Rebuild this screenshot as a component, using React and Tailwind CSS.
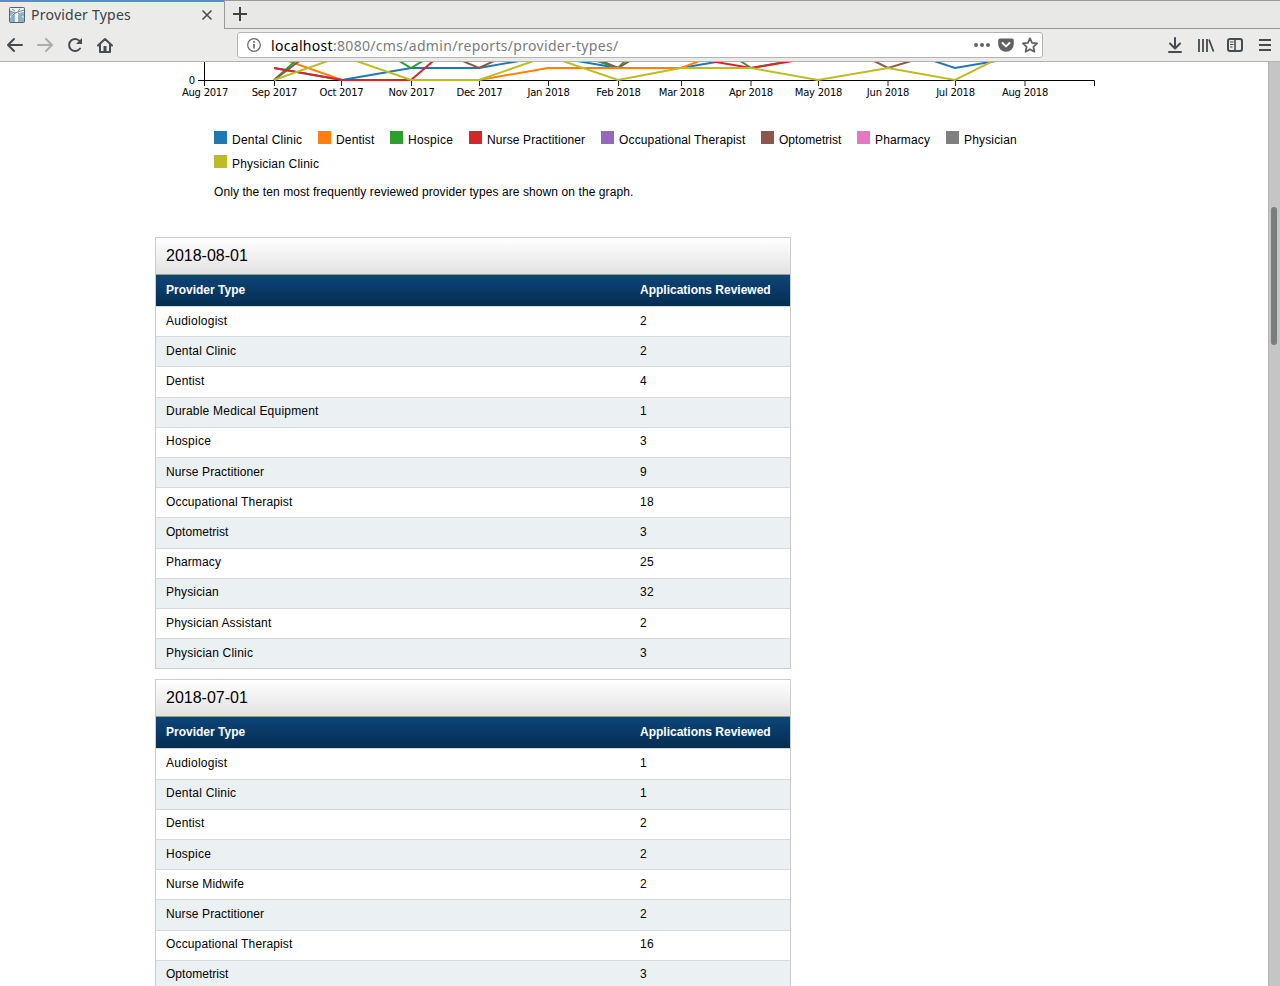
const AUGUST = [
  ['Audiologist', 2], ['Dental Clinic', 2], ['Dentist', 4], ['Durable Medical Equipment', 1],
  ['Hospice', 3], ['Nurse Practitioner', 9], ['Occupational Therapist', 18], ['Optometrist', 3],
  ['Pharmacy', 25], ['Physician', 32], ['Physician Assistant', 2], ['Physician Clinic', 3],
];
const JULY = [
  ['Audiologist', 1], ['Dental Clinic', 1], ['Dentist', 2], ['Hospice', 2], ['Nurse Midwife', 2],
  ['Nurse Practitioner', 2], ['Occupational Therapist', 16], ['Optometrist', 3],
];
const TRACKING = {
  Audiologist: 'tracking-[0.25px]',
  'Dental Clinic': 'tracking-[0.23px]',
  Dentist: 'tracking-[0.17px]',
  'Durable Medical Equipment': 'tracking-[0.21px]',
  Hospice: 'tracking-[0.25px]',
  'Nurse Midwife': 'tracking-[0.15px]',
  'Nurse Practitioner': 'tracking-[0.12px]',
  'Occupational Therapist': 'tracking-[0.15px]',
  Optometrist: 'tracking-[0.04px]',
  Pharmacy: 'tracking-[0.13px]',
  Physician: 'tracking-[0.16px]',
  'Physician Assistant': 'tracking-[0.14px]',
  'Physician Clinic': 'tracking-[0.19px]',
};
const LEGEND = [
  ['Dental Clinic', 'bg-[#1f77b4]', 'w-[104px]'], ['Dentist', 'bg-[#ff7f0e]', 'w-[72px]'],
  ['Hospice', 'bg-[#2ca02c]', 'w-[79px]'], ['Nurse Practitioner', 'bg-[#d62728]', 'w-[132px]'],
  ['Occupational Therapist', 'bg-[#9467bd]', 'w-[160px]'], ['Optometrist', 'bg-[#8c564b]', 'w-[96px]'],
  ['Pharmacy', 'bg-[#e377c2]', 'w-[89px]'], ['Physician', 'bg-[#7f7f7f]', 'w-[87px]'],
  ['Physician Clinic', 'bg-[#bcbd22]', 'w-[122px]'],
];
const TICKS = [
  [205, 'Aug 2017'], [274.5, 'Sep 2017'], [341.5, 'Oct 2017'], [411.5, 'Nov 2017'], [479.5, 'Dec 2017'],
  [548.5, 'Jan 2018'], [618.5, 'Feb 2018'], [681.5, 'Mar 2018'], [751, 'Apr 2018'], [818.5, 'May 2018'],
  [888, 'Jun 2018'], [955.5, 'Jul 2018'], [1025, 'Aug 2018'],
];
const LINES = [
  ['#1f77b4', '274,6 342,18 411,6 479,6 548,-6 618,6 681,6 751,-6'],
  ['#1f77b4', '919,-6 955,6 1025,-6'],
  ['#ff7f0e', '274,-6 342,18 411,18 479,18 548,6 618,6 681,6 713,-6'],
  ['#2ca02c', '274,18 301,-6'],
  ['#2ca02c', '391,-6 411,6 431,-6'],
  ['#2ca02c', '582,-6 618,6 630,-6'],
  ['#2ca02c', '733,-6 751,6'],
  ['#8c564b', '274,18 306,-6'],
  ['#8c564b', '451,-6 479,6 505,-6'],
  ['#8c564b', '590,-6 618,6 638,-6'],
  ['#8c564b', '751,6 820,-6'],
  ['#8c564b', '864,-6 888,6 928,-6'],
  ['#d62728', '274,6 342,18 411,18 439,-6'],
  ['#d62728', '681,-6 751,6 822,-6'],
  ['#ff7f0e', '548,6 681,6'],
  ['#bcbd22', '274,18 342,-6 411,18 479,18 548,-6 618,18 681,6 751,6 818,18 888,6 955,18 1003,-6'],
];

function Toolbar() {
  return (
    <header className="h-[62px] shrink-0 bg-[#ebebe9] font-['Noto_Sans',sans-serif] text-[#3b4144]">
      <div className="flex h-[29px]">
        <div className="flex w-[224px] items-center border-t-2 border-[#4a90d9] pb-[2px] pl-[9px]">
          <svg width="16" height="16" viewBox="0 0 16 16">
            <rect x=".5" y=".5" width="15" height="15" rx="1" fill="#8fb0c4" stroke="#4e6470" />
            <path d="M1 1h14v4l-5 1 5 4v1L9 7v8H6V7l-5 4V9l4-3-4-1z" fill="#eef3f4" />
            <path d="M1 4l5 2 3-1 6-2M6.500 6L2 9.500M9 6l4 3M3 2l3 2M11 1.500l-2 3" stroke="#52666f" strokeWidth=".8" fill="none" />
          </svg>
          <span className="ml-[6px] w-[170px] whitespace-nowrap text-[14px] leading-[20px] tracking-[0.24px]">Provider Types</span>
          <svg className="mt-px" width="12" height="12" viewBox="0 0 12 12" fill="none" stroke="#4b5053" strokeWidth="1.6"><path d="M1.5 1.5l9 9M10.5 1.5l-9 9" /></svg>
        </div>
        <div className="flex flex-1 border-b border-l border-t border-[#999] bg-[#e8e8e6] pl-[8px] pt-[6px]">
          <svg width="14" height="14" viewBox="0 0 14 14" stroke="#3b4144" strokeWidth="2"><path d="M7 0v14M0 7h14" /></svg>
        </div>
      </div>
      <div className="flex h-[33px] items-center border-b border-[#b3b2b0] pl-[6px] pr-[8px]">
        <svg width="110" height="20" viewBox="0 0 110 20" fill="none" stroke="#454b4e" strokeWidth="2" strokeLinecap="round" strokeLinejoin="round">
          <path d="M16 10H2M8 4l-6 6 6 6" />
          <path d="M32 10h14M40 4l6 6-6 6" stroke="#acacaa" />
          <path d="M74 13.500a6 6 0 1 1 .3-6.500" />
          <path d="M76 3v6h-6z" fill="#454b4e" stroke="none" />
          <path d="M92 10.5L99 4l7 6.500M94 9.500V17h10V9.500" />
          <path d="M97.500 11h3v5h-3z" fill="#454b4e" stroke="none" />
        </svg>
        <div className="ml-[121px] flex h-[26px] w-[806px] items-center rounded-[3px] border border-[#b5b4b2] bg-white pl-[9px] pr-[3px]">
          <svg width="14" height="14" viewBox="0 0 14 14"><circle cx="7" cy="7" r="6.300" fill="none" stroke="#666" strokeWidth="1.200" /><path d="M7 6v4.500M7 3v1.700" stroke="#666" strokeWidth="1.600" /></svg>
          <span className="ml-[10px] flex-1 whitespace-nowrap pt-px text-[14px] leading-[20px] tracking-[0.31px] text-[#7b7b7b]"><span className="text-black">localhost</span>:8080/cms/admin/reports/provider-types/</span>
          <svg width="66" height="18" viewBox="0 0 66 18" fill="#616161">
            <circle cx="3" cy="9" r="2" /><circle cx="9" cy="9" r="2" /><circle cx="15" cy="9" r="2" />
            <path d="M27 2.500h12a1.800 1.800 0 0 1 1.800 1.800V8a7.800 7.800 0 0 1-15.600 0V4.300A1.800 1.800 0 0 1 27 2.500z" />
            <path d="M29.500 7l3.500 3.400L36.500 7" fill="none" stroke="#fff" strokeWidth="2" strokeLinecap="round" strokeLinejoin="round" />
            <path d="M57 2.300l2.100 4.500 5 .6-3.700 3.400 1 4.900-4.400-2.500-4.400 2.500 1-4.900-3.700-3.400 5-.6z" fill="none" stroke="#616161" strokeWidth="1.800" strokeLinejoin="round" />
          </svg>
        </div>
        <svg className="ml-auto" width="106" height="20" viewBox="0 0 106 20" fill="none" stroke="#454b4e" strokeWidth="2">
          <path d="M9 3v10M4 8.500L9 13.500l5-5M3 17h12" strokeLinecap="round" strokeLinejoin="round" />
          <path d="M33 4v13M37 4v13M41 4v13M43 4.500L47.500 16.500" strokeWidth="1.800" />
          <rect x="62" y="4" width="14" height="12" rx="2" />
          <path d="M69 4v12" strokeWidth="1.600" /><path d="M64 7h3.500M64 9.500h3.500M64 12h2.500" strokeWidth="1" />
          <path d="M93 5h12M93 10h12M93 15h12" />
        </svg>
      </div>
    </header>
  );
}

function ReportTable({ title, rows }) {
  return (
    <section className="mb-[10.125px] w-[636px] border border-[#ccc]">
      <h2 className="h-[37px] border-b border-[#999] bg-gradient-to-b from-white to-[#e2e2e2] pl-[10px] text-[16px] leading-[36px]">{title}</h2>
      <div className="flex h-[31px] bg-gradient-to-b from-[#0d457a] to-[#062d51] pl-[10px] font-bold leading-[30px] text-white">
        <span className="w-[474px]">Provider Type</span><span>Applications Reviewed</span>
      </div>
      <div>
        {rows.map(([name, count]) => (
          <div key={name} className="flex h-[30.1875px] border-t border-[#d5d9da] bg-white pl-[10px] pt-[0.7px] leading-[26px] even:bg-[#ebf0f3]">
            <span className={`w-[474px] ${TRACKING[name]}`}>{name}</span>
            <span className="tracking-[0.3px]">{count}</span>
          </div>
        ))}
      </div>
    </section>
  );
}

export default function App() {
  return (
    <div className="flex h-[986px] w-[1280px] flex-col overflow-hidden bg-white">
      <Toolbar />
      <div className="flex min-h-0 flex-1">
        <main className="w-[1268px] overflow-hidden font-['Liberation_Sans',sans-serif] text-[12px] text-black">
          <svg className="block" width="1268" height="60" viewBox="0 0 1268 60">
            <path d="M198 18.500H1094.500V24M204.500 0V24" fill="none" stroke="#000" />
            {TICKS.map(([x, label]) => (
              <g key={label}>
                <path d={`M${x} 18v6`} stroke={label === 'Aug 2017' ? 'none' : '#222'} />
                <text x={x} y="34" textAnchor="middle" className="tracking-[-0.25px]" fontFamily="DejaVu Sans, sans-serif" fontSize="10">{label}</text>
              </g>
            ))}
            <text x="195" y="22" textAnchor="end" fontFamily="DejaVu Sans, sans-serif" fontSize="10">0</text>
            {LINES.map(([color, points]) => (
              <polyline key={color + points} points={points} fill="none" stroke={color} strokeWidth="2" />
            ))}
          </svg>
          <div className="ml-[214px] mt-[9px] flex w-[830px] flex-wrap">
            {LEGEND.map(([name, swatch, width]) => (
              <div key={name} className={`flex h-[24px] whitespace-nowrap leading-[18px] ${width}`}>
                <span className={`mr-[5px] h-[13px] w-[13px] shrink-0 ${swatch}`} />
                <span className={TRACKING[name]}>{name}</span>
              </div>
            ))}
          </div>
          <p className="ml-[214px] mt-[6px] h-[52px] leading-[14px] tracking-[0.085px]">Only the ten most frequently reviewed provider types are shown on the graph.</p>
          <div className="ml-[155px]">
            <ReportTable title="2018-08-01" rows={AUGUST} />
            <ReportTable title="2018-07-01" rows={JULY} />
          </div>
        </main>
        <div className="w-[12px] border-l border-[#b5b5b5] bg-[#c4c5c4] pl-[2px] pt-[145px]">
          <div className="h-[138px] w-[6px] rounded-full bg-[#797d7d]" />
        </div>
      </div>
    </div>
  );
}
